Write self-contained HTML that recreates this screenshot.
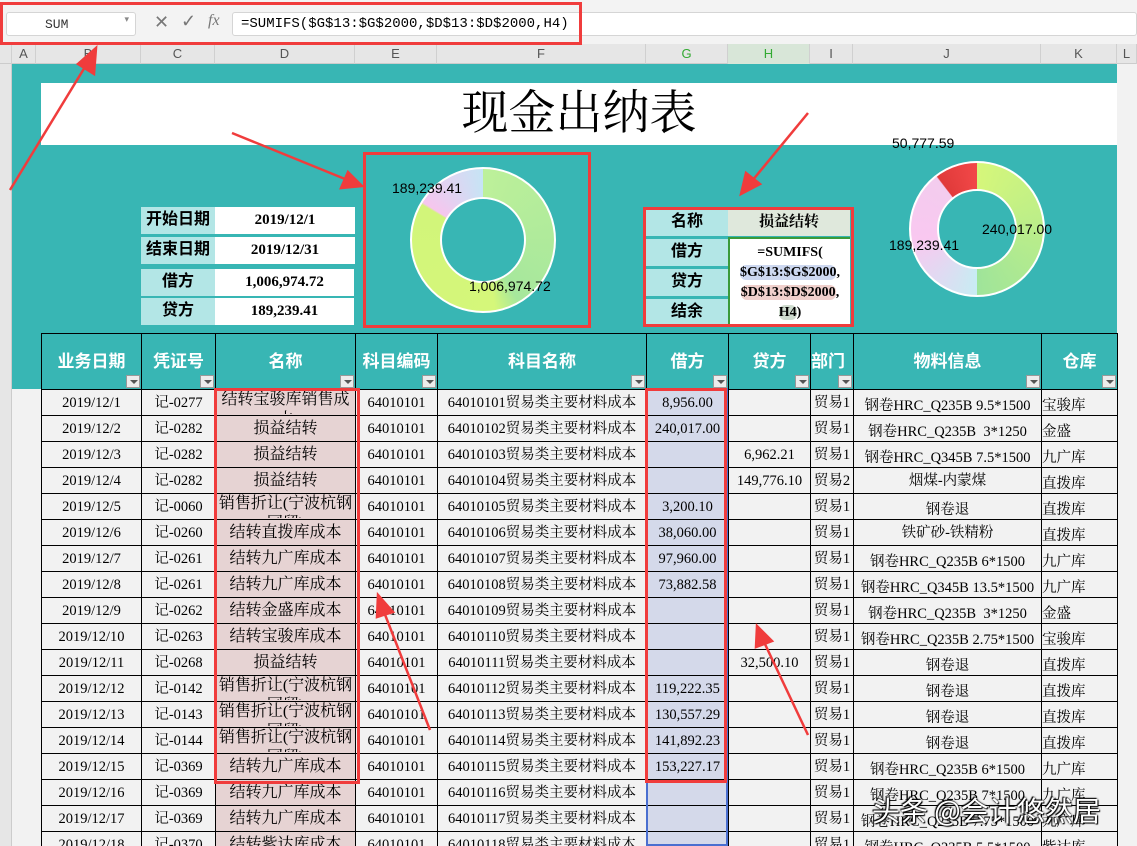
<!DOCTYPE html>
<html><head><meta charset="utf-8"><style>
*{margin:0;padding:0;box-sizing:border-box}
html,body{width:1137px;height:846px;overflow:hidden}
body{background:#f2f2f2;position:relative;font-family:"Liberation Serif","Noto Serif CJK SC",serif}
.a{position:absolute}
#fbar{left:0;top:0;width:1137px;height:44px;background:#f3f3f3}
#nbox{left:6px;top:12px;width:130px;height:24px;background:#fff;border:1px solid #d5d5d5;border-radius:3px;font:13px "Liberation Mono",monospace;padding:4px 0 0 38px;color:#333}
#fin{left:232px;top:12px;width:905px;height:24px;background:#fff;border:1px solid #d5d5d5;border-radius:3px;font:14px "Liberation Mono",monospace;padding:3px 0 0 8px;color:#000}
#colh{left:0;top:44px;width:1137px;height:20px;background:#e6e6e6;border-bottom:1px solid #ccc;font:13px "Liberation Sans",sans-serif;color:#555}
#colh div{position:absolute;top:0;height:20px;line-height:20px;text-align:center;border-right:1px solid #d0d0d0}
#rowh{left:0;top:64px;width:12px;height:782px;background:#e6e6e6;border-right:1px solid #ccc}
#teal{left:12px;top:64px;width:1105px;height:325px;background:#38b6b4}
#title{left:41px;top:83px;width:1076px;height:62px;background:#fff;text-align:center;font:47px/62px "Liberation Serif","Noto Serif CJK SC",serif}
.lb{background:#b3e6e6;font:bold 16px/26px "Liberation Sans","Noto Sans CJK SC",sans-serif;text-align:center;height:27px}
.vl{background:#fff;font:bold 15px/26px "Liberation Serif","Noto Serif CJK SC",serif;text-align:center;height:27px}
table{position:absolute;left:41px;top:333px;border-collapse:collapse;table-layout:fixed}
td{border:1px solid #000;height:26px;font-size:14.5px;text-align:center;white-space:nowrap;overflow:hidden;padding:0;line-height:24px;background:#f2f2f2}
th{border:1px solid #000;height:56px;background:#38b6b4;color:#fff;font:bold 17px "Liberation Sans","Noto Sans CJK SC",sans-serif;position:relative;padding-bottom:4px}
th i{position:absolute;right:1px;bottom:1px;width:14px;height:13px;background:#ececec;border:1px solid #999}
th i:after{content:"";position:absolute;left:3px;top:4px;border-left:4px solid transparent;border-right:4px solid transparent;border-top:4px solid #555}
td.d{background:#e6d3d3;vertical-align:top;white-space:normal;line-height:24px;font-size:16px}
td.d div{height:24px;overflow:hidden;line-height:20px;padding:0 2px}
td.d div.s{line-height:26px}
td.g{background:#d4d9ea}
td.j{line-height:18px;padding-top:7px;vertical-align:top}
.rb{position:absolute;border:3px solid #f03c3c}
</style></head><body>
<div class="a" id="fbar"></div>
<div class="a" id="nbox">SUM<span style="position:absolute;right:6px;top:2px;font-size:9px;color:#888">▾</span></div>
<div class="a" style="left:154px;top:12px;font:18px 'Liberation Sans',sans-serif;color:#777">✕</div>
<div class="a" style="left:181px;top:11px;font:18px 'Liberation Sans',sans-serif;color:#777">✓</div>
<div class="a" style="left:208px;top:12px;font:italic 16px 'Liberation Serif',serif;color:#777">fx</div>
<div class="a" id="fin">=SUMIFS($G$13:$G$2000,$D$13:$D$2000,H4)</div>
<div class="a" id="colh">
<div style="left:0;width:12px"></div><div style="left:12px;width:24px">A</div><div style="left:36px;width:105px">B</div><div style="left:141px;width:74px">C</div><div style="left:215px;width:140px">D</div><div style="left:355px;width:82px">E</div><div style="left:437px;width:209px">F</div><div style="left:646px;width:82px;color:#3a3">G</div><div style="left:728px;width:82px;color:#3a3;background:#d8e6d8">H</div><div style="left:810px;width:43px">I</div><div style="left:853px;width:188px">J</div><div style="left:1041px;width:76px">K</div><div style="left:1117px;width:20px">L</div>
</div>
<div class="a" id="rowh"></div>
<div class="a" id="teal"></div>
<div class="a" id="title">现金出纳表</div>

<div class="a lb" style="left:141px;top:207px;width:74px">开始日期</div><div class="a vl" style="left:215px;top:207px;width:140px">2019/12/1</div>
<div class="a lb" style="left:141px;top:237px;width:74px">结束日期</div><div class="a vl" style="left:215px;top:237px;width:140px">2019/12/31</div>
<div class="a lb" style="left:141px;top:269px;width:74px">借方</div><div class="a vl" style="left:215px;top:269px;width:139px">1,006,974.72</div>
<div class="a lb" style="left:141px;top:298px;width:74px">贷方</div><div class="a vl" style="left:215px;top:298px;width:139px">189,239.41</div>

<div class="a lb" style="left:646px;top:209px;width:82px">名称</div>
<div class="a vl" style="left:728px;top:209px;width:122px;background:#dfe8dc">损益结转</div>
<div class="a lb" style="left:646px;top:239px;width:82px">借方</div>
<div class="a lb" style="left:646px;top:269px;width:82px">贷方</div>
<div class="a lb" style="left:646px;top:299px;width:82px">结余</div>
<div class="a" style="left:728px;top:237px;width:122px;height:88px;background:#fff;border-left:2px solid #3a9a3a;border-top:2px solid #3a9a3a;font:bold 14px/20px 'Liberation Serif',serif;text-align:center;padding-top:4px">=SUMIFS(<br><span style="background:#cdd8f0;border-radius:6px">$G$13:$G$2000</span>,<br><span style="background:#f0d0cc;border-radius:6px">$D$13:$D$2000</span>,<br><span style="background:#cfdccf;border-radius:6px">H4</span>)</div>

<div class="a" style="left:410px;top:167px;width:146px;height:146px;border-radius:50%;border:2px solid #fff;background:conic-gradient(#bdf09a 0deg,#a6e79c 150deg,#d5f77a 170deg,#d2f57a 300deg,#f6c6ee 302deg,#c6e4f5 360deg)"></div>
<div class="a" style="left:440px;top:197px;width:86px;height:86px;border-radius:50%;border:2px solid #fff;background:#38b6b4"></div>
<div class="a" style="left:392px;top:180px;font:14px 'Liberation Sans',sans-serif">189,239.41</div>
<div class="a" style="left:469px;top:278px;font:14px 'Liberation Sans',sans-serif">1,006,974.72</div>
<div class="a" style="left:909px;top:161px;width:136px;height:136px;border-radius:50%;border:2px solid #fff;background:conic-gradient(#d6f77a 0deg,#9fe49a 180deg,#c8ecf3 180deg,#f9c8f0 260deg,#f3ccee 322deg,#e03a3a 323deg,#f24848 360deg)"></div>
<div class="a" style="left:937px;top:189px;width:80px;height:80px;border-radius:50%;border:2px solid #fff;background:#38b6b4"></div>
<div class="a" style="left:892px;top:135px;font:14px 'Liberation Sans',sans-serif">50,777.59</div>
<div class="a" style="left:889px;top:237px;font:14px 'Liberation Sans',sans-serif">189,239.41</div>
<div class="a" style="left:982px;top:221px;font:14px 'Liberation Sans',sans-serif">240,017.00</div>

<table>
<colgroup><col style="width:100px"><col style="width:74px"><col style="width:140px"><col style="width:82px"><col style="width:209px"><col style="width:82px"><col style="width:82px"><col style="width:43px"><col style="width:188px"><col style="width:76px"></colgroup>
<tr><th>业务日期<i></i></th><th>凭证号<i></i></th><th>名称<i></i></th><th>科目编码<i></i></th><th>科目名称<i></i></th><th>借方<i></i></th><th>贷方<i></i></th><th style="text-align:left">部门<i></i></th><th>物料信息<i></i></th><th>仓库<i></i></th></tr>
<tr><td>2019/12/1</td><td>记-0277</td><td class="d"><div>结转宝骏库销售成本</div></td><td>64010101</td><td>64010101贸易类主要材料成本</td><td class="g">8,956.00</td><td></td><td>贸易1</td><td class="j">钢卷HRC_Q235B 9.5*1500</td><td class="j" style="text-align:left">宝骏库</td></tr>
<tr><td>2019/12/2</td><td>记-0282</td><td class="d"><div class="s">损益结转</div></td><td>64010101</td><td>64010102贸易类主要材料成本</td><td class="g">240,017.00</td><td></td><td>贸易1</td><td class="j">钢卷HRC_Q235B&nbsp; 3*1250</td><td class="j" style="text-align:left">金盛</td></tr>
<tr><td>2019/12/3</td><td>记-0282</td><td class="d"><div class="s">损益结转</div></td><td>64010101</td><td>64010103贸易类主要材料成本</td><td class="g"></td><td>6,962.21</td><td>贸易1</td><td class="j">钢卷HRC_Q345B 7.5*1500</td><td class="j" style="text-align:left">九广库</td></tr>
<tr><td>2019/12/4</td><td>记-0282</td><td class="d"><div class="s">损益结转</div></td><td>64010101</td><td>64010104贸易类主要材料成本</td><td class="g"></td><td>149,776.10</td><td>贸易2</td><td>烟煤-内蒙煤</td><td class="j" style="text-align:left">直拨库</td></tr>
<tr><td>2019/12/5</td><td>记-0060</td><td class="d"><div>销售折让(宁波杭钢国贸)</div></td><td>64010101</td><td>64010105贸易类主要材料成本</td><td class="g">3,200.10</td><td></td><td>贸易1</td><td class="j">钢卷退</td><td class="j" style="text-align:left">直拨库</td></tr>
<tr><td>2019/12/6</td><td>记-0260</td><td class="d"><div class="s">结转直拨库成本</div></td><td>64010101</td><td>64010106贸易类主要材料成本</td><td class="g">38,060.00</td><td></td><td>贸易1</td><td>铁矿砂-铁精粉</td><td class="j" style="text-align:left">直拨库</td></tr>
<tr><td>2019/12/7</td><td>记-0261</td><td class="d"><div class="s">结转九广库成本</div></td><td>64010101</td><td>64010107贸易类主要材料成本</td><td class="g">97,960.00</td><td></td><td>贸易1</td><td class="j">钢卷HRC_Q235B 6*1500</td><td class="j" style="text-align:left">九广库</td></tr>
<tr><td>2019/12/8</td><td>记-0261</td><td class="d"><div class="s">结转九广库成本</div></td><td>64010101</td><td>64010108贸易类主要材料成本</td><td class="g">73,882.58</td><td></td><td>贸易1</td><td class="j">钢卷HRC_Q345B 13.5*1500</td><td class="j" style="text-align:left">九广库</td></tr>
<tr><td>2019/12/9</td><td>记-0262</td><td class="d"><div class="s">结转金盛库成本</div></td><td>64010101</td><td>64010109贸易类主要材料成本</td><td class="g"></td><td></td><td>贸易1</td><td class="j">钢卷HRC_Q235B&nbsp; 3*1250</td><td class="j" style="text-align:left">金盛</td></tr>
<tr><td>2019/12/10</td><td>记-0263</td><td class="d"><div class="s">结转宝骏库成本</div></td><td>64010101</td><td>64010110贸易类主要材料成本</td><td class="g"></td><td></td><td>贸易1</td><td class="j">钢卷HRC_Q235B 2.75*1500</td><td class="j" style="text-align:left">宝骏库</td></tr>
<tr><td>2019/12/11</td><td>记-0268</td><td class="d"><div class="s">损益结转</div></td><td>64010101</td><td>64010111贸易类主要材料成本</td><td class="g"></td><td>32,500.10</td><td>贸易1</td><td class="j">钢卷退</td><td class="j" style="text-align:left">直拨库</td></tr>
<tr><td>2019/12/12</td><td>记-0142</td><td class="d"><div>销售折让(宁波杭钢国贸)</div></td><td>64010101</td><td>64010112贸易类主要材料成本</td><td class="g">119,222.35</td><td></td><td>贸易1</td><td class="j">钢卷退</td><td class="j" style="text-align:left">直拨库</td></tr>
<tr><td>2019/12/13</td><td>记-0143</td><td class="d"><div>销售折让(宁波杭钢国贸)</div></td><td>64010101</td><td>64010113贸易类主要材料成本</td><td class="g">130,557.29</td><td></td><td>贸易1</td><td class="j">钢卷退</td><td class="j" style="text-align:left">直拨库</td></tr>
<tr><td>2019/12/14</td><td>记-0144</td><td class="d"><div>销售折让(宁波杭钢国贸)</div></td><td>64010101</td><td>64010114贸易类主要材料成本</td><td class="g">141,892.23</td><td></td><td>贸易1</td><td class="j">钢卷退</td><td class="j" style="text-align:left">直拨库</td></tr>
<tr><td>2019/12/15</td><td>记-0369</td><td class="d"><div class="s">结转九广库成本</div></td><td>64010101</td><td>64010115贸易类主要材料成本</td><td class="g">153,227.17</td><td></td><td>贸易1</td><td class="j">钢卷HRC_Q235B 6*1500</td><td class="j" style="text-align:left">九广库</td></tr>
<tr><td>2019/12/16</td><td>记-0369</td><td class="d"><div class="s">结转九广库成本</div></td><td>64010101</td><td>64010116贸易类主要材料成本</td><td class="g"></td><td></td><td>贸易1</td><td class="j">钢卷HRC_Q235B 7*1500</td><td class="j" style="text-align:left">九广库</td></tr>
<tr><td>2019/12/17</td><td>记-0369</td><td class="d"><div class="s">结转九广库成本</div></td><td>64010101</td><td>64010117贸易类主要材料成本</td><td class="g"></td><td></td><td>贸易1</td><td class="j">钢卷HRC_Q235B 7.75*1500</td><td class="j" style="text-align:left">九广库</td></tr>
<tr><td>2019/12/18</td><td>记-0370</td><td class="d"><div class="s">结转紫达库成本</div></td><td>64010101</td><td>64010118贸易类主要材料成本</td><td class="g"></td><td></td><td>贸易1</td><td class="j">钢卷HRC_Q235B 5.5*1500</td><td class="j" style="text-align:left">紫达库</td></tr>
</table>
<div class="a" style="left:646px;top:388px;width:82px;height:458px;border:2px solid #4a6fd0;border-top:none"></div>

<div class="rb" style="left:0;top:2px;width:582px;height:43px"></div>
<div class="rb" style="left:363px;top:152px;width:228px;height:176px"></div>
<div class="rb" style="left:643px;top:207px;width:211px;height:120px"></div>
<div class="rb" style="left:214px;top:388px;width:146px;height:396px"></div>
<div class="rb" style="left:645px;top:388px;width:82px;height:395px"></div>

<svg class="a" style="left:0;top:0" width="1137" height="846">
<g stroke="#f03c3c" stroke-width="2.5" fill="#f03c3c">
<line x1="10" y1="190" x2="88" y2="62"/><polygon points="96,48 94,74 78,64"/>
<line x1="232" y1="133" x2="345" y2="179"/><polygon points="362,186 341,188 348,172"/>
<line x1="808" y1="113" x2="752" y2="181"/><polygon points="741,194 746,173 760,184"/>
<line x1="430" y1="730" x2="384" y2="612"/><polygon points="378,595 393,612 377,617"/>
<line x1="808" y1="735" x2="764" y2="642"/><polygon points="757,626 772,641 756,647"/>
</g></svg>
<div class="a" style="left:872px;top:790px;font:28px 'Noto Sans CJK SC',sans-serif;color:#fff;text-shadow:0 0 2px #000,1px 1px 1px #000,-1px -1px 1px #000">头条 @会计悠然居</div>
</body></html>
